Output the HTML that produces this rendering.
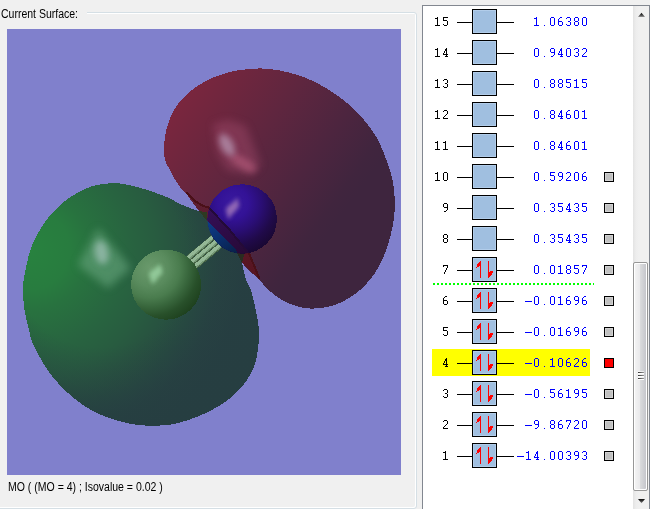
<!DOCTYPE html>
<html><head><meta charset="utf-8"><title>MO</title>
<style>
html,body{margin:0;padding:0}
body{width:650px;height:509px;overflow:hidden;background:#f0f0f0;position:relative;font-family:"Liberation Sans",sans-serif;font-size:12px;color:#000}
.gb{position:absolute;left:-6px;top:12px;width:421px;height:495px;border:1px solid #d5dfe5;border-radius:3px;box-shadow:inset 1px 1px 0 #fff,inset -1px -1px 0 #fff}
.lbl{position:absolute;left:0;top:6px;width:87px;height:16px;background:#f0f0f0;line-height:16px;white-space:nowrap}
  .lbl span{position:absolute;left:.5px;top:0;transform:scaleX(.875);transform-origin:0 0}
.cv{position:absolute;left:7px;top:29px;width:394px;height:446px;background:#8080cc;overflow:hidden}
.cv svg{display:block}
.cap{position:absolute;left:8px;top:479px;line-height:16px;white-space:nowrap;transform:scaleX(.876);transform-origin:0 0}
.lb{position:absolute;left:422px;top:5px;width:226px;height:520px;border:1px solid #828790;background:#fff}
.list{position:absolute;left:0;top:0;width:650px;height:509px;font-family:"Liberation Mono",monospace;font-size:13.33px}
.row{position:absolute;left:0;width:650px;height:25px}
.row.sel::before{content:"";position:absolute;left:432px;top:-1px;width:158px;height:27px;background:#ff0}
.n{position:absolute;left:418px;width:32px;top:4px;line-height:17px;text-align:right;color:transparent}
.ln{position:absolute;left:457px;top:13px;width:57px;height:1px;background:#000}
.bx{position:absolute;left:472px;top:0;width:23px;height:23px;border:1px solid #000;background:#a0bfe0;box-shadow:inset 0 0 0 1px #b2cdea}
.ar{position:absolute;left:0;top:0}
.e{position:absolute;left:501px;width:88px;top:4px;line-height:17px;text-align:right;color:transparent}
.px{position:absolute;left:0;top:0}
.sq{position:absolute;left:604px;top:8px;width:8px;height:8px;border:1px solid #000;background:#c0c0c0;box-shadow:inset 0 0 0 1px #d2d2d2}
.sq.red{background:#f00;box-shadow:none}
.dot{position:absolute;left:433px;top:283px;width:161px;height:2px;background:repeating-linear-gradient(90deg,#0f0 0,#0f0 2px,transparent 2px,transparent 4px)}
.sb{position:absolute;left:633px;top:6px;width:16px;height:503px;background:linear-gradient(90deg,#e3e3e3 0,#ededed 3px,#f0f0f0 6px,#f0f0f0 100%)}
.th{position:absolute;left:633px;top:262px;width:13px;height:227px;border:1px solid #979797;border-radius:2px;background:linear-gradient(90deg,#f5f5f5 0,#e9e9eb 45%,#d9dadc 50%,#c2c3c9 100%);box-shadow:inset 1px 1px 0 #fff,inset -1px -1px 0 #fff}
.gr{position:absolute;left:638px;width:6px;height:1px;background:linear-gradient(90deg,#333,#666 50%,#9a9a9a);box-shadow:0 1px 0 #fff,0 -1px 0 rgba(255,255,255,.6)}
.sa{position:absolute;left:637px}
.au,.ad{position:absolute;left:638px;width:0;height:0;border-left:4px solid transparent;border-right:4px solid transparent}
.au{top:13px;border-bottom:4px solid #303030}
.ad{top:499px;border-top:4px solid #303030}
</style></head><body>
<div class="gb"></div>
<div class="lbl"><span>Current Surface:</span></div>
<div class="cv"><svg width="394" height="446" viewBox="7 29 394 446" shape-rendering="crispEdges">
<defs>
<radialGradient id="gG" gradientUnits="userSpaceOnUse" cx="30" cy="250" r="220"><stop offset="0" stop-color="#28823f"/><stop offset=".18" stop-color="#287c3f"/><stop offset=".27" stop-color="#28723f"/><stop offset=".45" stop-color="#286440"/><stop offset=".57" stop-color="#285c40"/><stop offset=".66" stop-color="#285440"/><stop offset=".78" stop-color="#274a41"/><stop offset=".87" stop-color="#274342"/><stop offset=".98" stop-color="#263f42"/></radialGradient>
<radialGradient id="gG2" gradientUnits="userSpaceOnUse" cx="100" cy="260" r="175"><stop offset="0" stop-color="#263e41" stop-opacity="0"/><stop offset=".5" stop-color="#263e41" stop-opacity="0"/><stop offset=".72" stop-color="#263e41" stop-opacity=".35"/><stop offset=".88" stop-color="#263e41" stop-opacity=".75"/><stop offset="1" stop-color="#263e41" stop-opacity=".92"/></radialGradient>
<linearGradient id="gBand" gradientUnits="userSpaceOnUse" x1="186" y1="192" x2="260" y2="279"><stop offset="0" stop-color="#5e2034"/><stop offset=".5" stop-color="#5a1a2a"/><stop offset="1" stop-color="#581420"/></linearGradient>
<linearGradient id="gBand2" gradientUnits="userSpaceOnUse" x1="205" y1="205" x2="248" y2="254"><stop offset="0" stop-color="#36105a"/><stop offset=".5" stop-color="#2e0c48"/><stop offset="1" stop-color="#260a34"/></linearGradient>
<linearGradient id="gR" gradientUnits="userSpaceOnUse" x1="164.600" y1="76" x2="346.400" y2="208.200"><stop offset="0" stop-color="#83263e"/><stop offset=".25" stop-color="#71263e"/><stop offset=".5" stop-color="#5f263f"/><stop offset=".75" stop-color="#4d253f"/><stop offset=".94" stop-color="#40253e"/><stop offset="1" stop-color="#3e253e"/></linearGradient>
<radialGradient id="gB" gradientUnits="userSpaceOnUse" cx="233" cy="203" r="52">
<stop offset="0" stop-color="#3a1aa0"/><stop offset=".3" stop-color="#331296"/><stop offset=".55" stop-color="#2a0e74"/><stop offset=".8" stop-color="#200a4a"/><stop offset="1" stop-color="#1a0834"/></radialGradient>
<linearGradient id="gB2" gradientUnits="userSpaceOnUse" x1="208" y1="215" x2="236" y2="254">
<stop offset="0" stop-color="#0e408e"/><stop offset=".5" stop-color="#0b3070"/><stop offset="1" stop-color="#082048"/></linearGradient>
<radialGradient id="gS" gradientUnits="userSpaceOnUse" cx="150" cy="268" r="60">
<stop offset="0" stop-color="#6a9a6c"/><stop offset=".3" stop-color="#5a8c5e"/><stop offset=".5" stop-color="#4a7c4e"/><stop offset=".65" stop-color="#38663c"/><stop offset=".8" stop-color="#28502a"/><stop offset="1" stop-color="#1c3e1c"/></radialGradient>
<filter id="b4" x="-50%" y="-50%" width="200%" height="200%"><feGaussianBlur stdDeviation="4"/></filter>
<filter id="b3" x="-50%" y="-50%" width="200%" height="200%"><feGaussianBlur stdDeviation="3.2"/></filter>
<filter id="b25" x="-50%" y="-50%" width="200%" height="200%"><feGaussianBlur stdDeviation="2.5"/></filter>
<filter id="b22" x="-50%" y="-50%" width="200%" height="200%"><feGaussianBlur stdDeviation="2.2"/></filter>
<filter id="b18" x="-50%" y="-50%" width="200%" height="200%"><feGaussianBlur stdDeviation="1.7"/></filter>
<filter id="b1" x="-50%" y="-50%" width="200%" height="200%"><feGaussianBlur stdDeviation="1.2"/></filter>
<clipPath id="cB"><circle cx="242.2" cy="219" r="34.75"/></clipPath>
<clipPath id="cS"><circle cx="166.1" cy="284.7" r="35"/></clipPath>
<clipPath id="cR"><path d="M185.7 192.7C184.8 191.8 181.9 189.4 180.0 187.0C178.1 184.6 175.7 180.8 174.0 178.0C172.3 175.2 171.5 173.0 170.0 170.0C168.5 167.0 165.9 163.7 165.0 160.0C164.1 156.3 164.4 152.0 164.4 148.0C164.4 144.0 164.4 140.0 165.0 136.0C165.6 132.0 166.8 127.7 168.0 124.0C169.2 120.3 170.3 117.3 172.0 114.0C173.7 110.7 175.7 107.2 178.0 104.0C180.3 100.8 183.0 97.8 186.0 95.0C189.0 92.2 192.3 89.5 196.0 87.0C199.7 84.5 204.0 82.0 208.0 80.0C212.0 78.0 215.7 76.5 220.0 75.0C224.3 73.5 229.0 72.0 234.0 71.0C239.0 70.0 245.0 69.4 250.0 69.0C255.0 68.6 259.0 68.3 264.0 68.6C269.0 68.8 275.0 69.6 280.0 70.5C285.0 71.4 289.7 72.8 294.0 74.0C298.3 75.2 302.0 76.4 306.0 78.0C310.0 79.6 314.0 81.5 318.0 83.6C322.0 85.7 326.0 88.0 330.0 90.6C334.0 93.2 338.0 95.9 342.0 99.0C346.0 102.1 350.3 105.5 354.0 109.0C357.7 112.5 360.8 116.2 364.0 120.0C367.2 123.8 370.3 128.0 373.0 132.0C375.7 136.0 377.8 139.3 380.0 144.0C382.2 148.7 384.5 154.7 386.4 160.0C388.3 165.3 390.3 171.0 391.6 176.0C392.9 181.0 393.5 185.3 394.0 190.0C394.5 194.7 394.8 199.3 394.8 204.0C394.8 208.7 394.6 213.0 394.0 218.0C393.4 223.0 392.2 228.9 391.0 233.8C389.8 238.7 388.6 242.9 387.0 247.5C385.4 252.1 383.6 256.9 381.5 261.3C379.4 265.7 376.9 270.1 374.2 274.0C371.5 277.9 368.5 281.5 365.4 284.8C362.3 288.1 359.1 291.0 355.5 293.7C351.9 296.4 348.1 298.9 343.8 301.0C339.6 303.1 335.3 305.1 330.0 306.4C324.7 307.7 317.0 308.5 312.0 308.6C307.0 308.7 304.0 307.9 300.0 307.0C296.0 306.1 292.0 304.8 288.0 303.0C284.0 301.2 279.7 298.6 276.0 296.0C272.3 293.4 268.7 290.2 266.0 287.5C263.3 284.8 262.5 282.9 259.6 280.0C256.7 277.1 251.5 272.8 248.6 269.9C245.7 267.0 243.1 264.0 242.0 262.8L236 250L221.4 235L207.3 221L198.9 210.5L194.2 204.7Z"/></clipPath>
<clipPath id="cG"><path d="M210.0 214.0C209.5 213.8 208.9 212.9 207.1 212.5C205.2 212.1 201.8 212.1 198.9 211.3C196.1 210.6 193.2 209.2 190.0 208.0C186.8 206.8 183.7 205.6 180.0 203.9C176.3 202.2 172.0 199.4 168.0 197.6C164.0 195.8 160.0 194.4 156.0 193.0C152.0 191.6 148.0 190.2 144.0 189.0C140.0 187.8 136.0 186.5 132.0 185.6C128.0 184.7 122.8 184.0 120.0 183.6C117.2 183.2 117.8 182.9 115.0 183.0C112.2 183.1 107.0 183.4 103.0 184.0C99.0 184.6 95.0 185.3 91.0 186.6C87.0 187.9 83.0 189.9 79.0 192.0C75.0 194.1 70.7 196.7 67.0 199.4C63.3 202.1 60.2 204.9 57.0 208.0C53.8 211.1 50.7 214.7 48.0 218.0C45.3 221.3 43.2 224.5 41.0 228.0C38.8 231.5 36.8 235.2 35.0 239.0C33.2 242.8 31.3 247.0 30.0 251.0C28.7 255.0 27.8 259.5 27.0 263.0C26.2 266.5 25.6 268.8 25.0 272.0C24.4 275.2 23.7 278.3 23.4 282.0C23.1 285.7 22.9 290.0 23.0 294.0C23.1 298.0 23.5 302.0 24.0 306.0C24.5 310.0 25.2 314.0 26.0 318.0C26.8 322.0 28.1 326.3 29.0 330.0C29.9 333.7 30.2 336.7 31.4 340.0C32.6 343.3 34.2 346.5 36.0 350.0C37.8 353.5 39.8 357.3 42.0 361.0C44.2 364.7 46.3 368.3 49.0 372.0C51.7 375.7 54.8 379.5 58.0 383.0C61.2 386.5 64.5 389.8 68.0 393.0C71.5 396.2 75.2 399.2 79.0 402.0C82.8 404.8 86.7 407.6 91.0 410.0C95.3 412.4 100.3 414.6 105.0 416.4C109.7 418.2 114.3 419.7 119.0 421.0C123.7 422.3 127.7 423.4 133.0 424.2C138.3 425.0 144.0 425.9 151.0 425.8C158.0 425.7 167.0 425.4 175.0 423.8C183.0 422.2 191.7 419.0 199.0 416.0C206.3 413.0 213.0 409.7 219.0 406.0C225.0 402.3 230.3 398.3 235.0 394.0C239.7 389.7 243.7 385.0 247.0 380.0C250.3 375.0 253.1 370.0 255.0 364.0C256.9 358.0 257.8 349.7 258.5 344.0C259.2 338.3 259.2 334.7 259.0 330.0C258.8 325.3 257.8 320.3 257.0 316.0C256.2 311.7 255.4 308.3 254.4 304.0C253.4 299.7 252.4 294.0 251.0 290.0C249.6 286.0 247.4 283.1 246.2 280.0C245.0 276.9 244.6 274.3 243.9 271.4C243.2 268.5 242.3 264.2 242.0 262.8L236 250L221.4 235L207.3 221Z"/></clipPath>
</defs>
<rect x="7" y="29" width="394" height="446" fill="#8080cc"/>
<path d="M210.0 214.0C209.5 213.8 208.9 212.9 207.1 212.5C205.2 212.1 201.8 212.1 198.9 211.3C196.1 210.6 193.2 209.2 190.0 208.0C186.8 206.8 183.7 205.6 180.0 203.9C176.3 202.2 172.0 199.4 168.0 197.6C164.0 195.8 160.0 194.4 156.0 193.0C152.0 191.6 148.0 190.2 144.0 189.0C140.0 187.8 136.0 186.5 132.0 185.6C128.0 184.7 122.8 184.0 120.0 183.6C117.2 183.2 117.8 182.9 115.0 183.0C112.2 183.1 107.0 183.4 103.0 184.0C99.0 184.6 95.0 185.3 91.0 186.6C87.0 187.9 83.0 189.9 79.0 192.0C75.0 194.1 70.7 196.7 67.0 199.4C63.3 202.1 60.2 204.9 57.0 208.0C53.8 211.1 50.7 214.7 48.0 218.0C45.3 221.3 43.2 224.5 41.0 228.0C38.8 231.5 36.8 235.2 35.0 239.0C33.2 242.8 31.3 247.0 30.0 251.0C28.7 255.0 27.8 259.5 27.0 263.0C26.2 266.5 25.6 268.8 25.0 272.0C24.4 275.2 23.7 278.3 23.4 282.0C23.1 285.7 22.9 290.0 23.0 294.0C23.1 298.0 23.5 302.0 24.0 306.0C24.5 310.0 25.2 314.0 26.0 318.0C26.8 322.0 28.1 326.3 29.0 330.0C29.9 333.7 30.2 336.7 31.4 340.0C32.6 343.3 34.2 346.5 36.0 350.0C37.8 353.5 39.8 357.3 42.0 361.0C44.2 364.7 46.3 368.3 49.0 372.0C51.7 375.7 54.8 379.5 58.0 383.0C61.2 386.5 64.5 389.8 68.0 393.0C71.5 396.2 75.2 399.2 79.0 402.0C82.8 404.8 86.7 407.6 91.0 410.0C95.3 412.4 100.3 414.6 105.0 416.4C109.7 418.2 114.3 419.7 119.0 421.0C123.7 422.3 127.7 423.4 133.0 424.2C138.3 425.0 144.0 425.9 151.0 425.8C158.0 425.7 167.0 425.4 175.0 423.8C183.0 422.2 191.7 419.0 199.0 416.0C206.3 413.0 213.0 409.7 219.0 406.0C225.0 402.3 230.3 398.3 235.0 394.0C239.7 389.7 243.7 385.0 247.0 380.0C250.3 375.0 253.1 370.0 255.0 364.0C256.9 358.0 257.8 349.7 258.5 344.0C259.2 338.3 259.2 334.7 259.0 330.0C258.8 325.3 257.8 320.3 257.0 316.0C256.2 311.7 255.4 308.3 254.4 304.0C253.4 299.7 252.4 294.0 251.0 290.0C249.6 286.0 247.4 283.1 246.2 280.0C245.0 276.9 244.6 274.3 243.9 271.4C243.2 268.5 242.3 264.2 242.0 262.8L236 250L221.4 235L207.3 221Z" fill="url(#gG)"/>
<path d="M210.0 214.0C209.5 213.8 208.9 212.9 207.1 212.5C205.2 212.1 201.8 212.1 198.9 211.3C196.1 210.6 193.2 209.2 190.0 208.0C186.8 206.8 183.7 205.6 180.0 203.9C176.3 202.2 172.0 199.4 168.0 197.6C164.0 195.8 160.0 194.4 156.0 193.0C152.0 191.6 148.0 190.2 144.0 189.0C140.0 187.8 136.0 186.5 132.0 185.6C128.0 184.7 122.8 184.0 120.0 183.6C117.2 183.2 117.8 182.9 115.0 183.0C112.2 183.1 107.0 183.4 103.0 184.0C99.0 184.6 95.0 185.3 91.0 186.6C87.0 187.9 83.0 189.9 79.0 192.0C75.0 194.1 70.7 196.7 67.0 199.4C63.3 202.1 60.2 204.9 57.0 208.0C53.8 211.1 50.7 214.7 48.0 218.0C45.3 221.3 43.2 224.5 41.0 228.0C38.8 231.5 36.8 235.2 35.0 239.0C33.2 242.8 31.3 247.0 30.0 251.0C28.7 255.0 27.8 259.5 27.0 263.0C26.2 266.5 25.6 268.8 25.0 272.0C24.4 275.2 23.7 278.3 23.4 282.0C23.1 285.7 22.9 290.0 23.0 294.0C23.1 298.0 23.5 302.0 24.0 306.0C24.5 310.0 25.2 314.0 26.0 318.0C26.8 322.0 28.1 326.3 29.0 330.0C29.9 333.7 30.2 336.7 31.4 340.0C32.6 343.3 34.2 346.5 36.0 350.0C37.8 353.5 39.8 357.3 42.0 361.0C44.2 364.7 46.3 368.3 49.0 372.0C51.7 375.7 54.8 379.5 58.0 383.0C61.2 386.5 64.5 389.8 68.0 393.0C71.5 396.2 75.2 399.2 79.0 402.0C82.8 404.8 86.7 407.6 91.0 410.0C95.3 412.4 100.3 414.6 105.0 416.4C109.7 418.2 114.3 419.7 119.0 421.0C123.7 422.3 127.7 423.4 133.0 424.2C138.3 425.0 144.0 425.9 151.0 425.8C158.0 425.7 167.0 425.4 175.0 423.8C183.0 422.2 191.7 419.0 199.0 416.0C206.3 413.0 213.0 409.7 219.0 406.0C225.0 402.3 230.3 398.3 235.0 394.0C239.7 389.7 243.7 385.0 247.0 380.0C250.3 375.0 253.1 370.0 255.0 364.0C256.9 358.0 257.8 349.7 258.5 344.0C259.2 338.3 259.2 334.7 259.0 330.0C258.8 325.3 257.8 320.3 257.0 316.0C256.2 311.7 255.4 308.3 254.4 304.0C253.4 299.7 252.4 294.0 251.0 290.0C249.6 286.0 247.4 283.1 246.2 280.0C245.0 276.9 244.6 274.3 243.9 271.4C243.2 268.5 242.3 264.2 242.0 262.8L236 250L221.4 235L207.3 221Z" fill="url(#gG2)"/>
<g clip-path="url(#cG)">
<path d="M98 228L131 268L108 288L78 265Z" fill="#6aa880" opacity=".58" filter="url(#b4)"/>
<ellipse cx="101.500" cy="252.500" rx="7" ry="12" transform="rotate(-10 101.500 252.500)" fill="#98bcae" opacity=".82" filter="url(#b3)"/>
</g>
<path d="M185.7 192.7C184.8 191.8 181.9 189.4 180.0 187.0C178.1 184.6 175.7 180.8 174.0 178.0C172.3 175.2 171.5 173.0 170.0 170.0C168.5 167.0 165.9 163.7 165.0 160.0C164.1 156.3 164.4 152.0 164.4 148.0C164.4 144.0 164.4 140.0 165.0 136.0C165.6 132.0 166.8 127.7 168.0 124.0C169.2 120.3 170.3 117.3 172.0 114.0C173.7 110.7 175.7 107.2 178.0 104.0C180.3 100.8 183.0 97.8 186.0 95.0C189.0 92.2 192.3 89.5 196.0 87.0C199.7 84.5 204.0 82.0 208.0 80.0C212.0 78.0 215.7 76.5 220.0 75.0C224.3 73.5 229.0 72.0 234.0 71.0C239.0 70.0 245.0 69.4 250.0 69.0C255.0 68.6 259.0 68.3 264.0 68.6C269.0 68.8 275.0 69.6 280.0 70.5C285.0 71.4 289.7 72.8 294.0 74.0C298.3 75.2 302.0 76.4 306.0 78.0C310.0 79.6 314.0 81.5 318.0 83.6C322.0 85.7 326.0 88.0 330.0 90.6C334.0 93.2 338.0 95.9 342.0 99.0C346.0 102.1 350.3 105.5 354.0 109.0C357.7 112.5 360.8 116.2 364.0 120.0C367.2 123.8 370.3 128.0 373.0 132.0C375.7 136.0 377.8 139.3 380.0 144.0C382.2 148.7 384.5 154.7 386.4 160.0C388.3 165.3 390.3 171.0 391.6 176.0C392.9 181.0 393.5 185.3 394.0 190.0C394.5 194.7 394.8 199.3 394.8 204.0C394.8 208.7 394.6 213.0 394.0 218.0C393.4 223.0 392.2 228.9 391.0 233.8C389.8 238.7 388.6 242.9 387.0 247.5C385.4 252.1 383.6 256.9 381.5 261.3C379.4 265.7 376.9 270.1 374.2 274.0C371.5 277.9 368.5 281.5 365.4 284.8C362.3 288.1 359.1 291.0 355.5 293.7C351.9 296.4 348.1 298.9 343.8 301.0C339.6 303.1 335.3 305.1 330.0 306.4C324.7 307.7 317.0 308.5 312.0 308.6C307.0 308.7 304.0 307.9 300.0 307.0C296.0 306.1 292.0 304.8 288.0 303.0C284.0 301.2 279.7 298.6 276.0 296.0C272.3 293.4 268.7 290.2 266.0 287.5C263.3 284.8 262.5 282.9 259.6 280.0C256.7 277.1 251.5 272.8 248.6 269.9C245.7 267.0 243.1 264.0 242.0 262.8L236 250L221.4 235L207.3 221L198.9 210.5L194.2 204.7Z" fill="url(#gR)"/>
<g clip-path="url(#cR)">
<path d="M213 124L228 120L246 126L261 165L251 175L227 170L217 152Z" fill="#a04c6c" opacity=".45" filter="url(#b4)"/>
<ellipse cx="243" cy="163" rx="15" ry="5.500" transform="rotate(32 243 163)" fill="#b05878" opacity=".7" filter="url(#b3)"/>
<ellipse cx="227" cy="145" rx="6" ry="12" transform="rotate(-28 227 145)" fill="#b08ca8" opacity=".85" filter="url(#b3)"/>
</g>
<!-- red rim band along nodal plane -->
<path d="M186.3 192L195.7 201.5L203.6 206.2L208.9 207.6L230 230.4L249.4 254.2L259.6 279.3L242 262.8L236 250L221.4 235L207.3 221L198.9 210.5L194.2 204.7Z" fill="url(#gBand)"/>
<path d="M186.3 192L195.7 201.5L203.6 206.2L208.9 207.6L230 230.4L249.4 254.2L259.6 279" fill="none" stroke="#4a1018" stroke-width="2"/>
<path d="M198.9 211L207.1 212.5L207.5 221.5Z" fill="#2e3a22"/>
<path d="M235.500 250.500L244 254.500L242 262.800Z" fill="#2a2c20"/>
<!-- bonds -->
<g stroke-linecap="butt" fill="none">
<g stroke="#446244" stroke-width="5.4"><path d="M183.7 261.8L217.6 233.7"/><path d="M187.3 266.1L221.1 237.9"/><path d="M190.8 270.3L224.7 242.2"/></g>
<g stroke="#769a78" stroke-width="4.2"><path d="M183.6 261.6L217.4 233.5"/><path d="M187.1 265.8L220.9 237.7"/><path d="M190.6 270.1L224.5 241.9"/></g>
<g stroke="#94b896" stroke-width="3"><path d="M183.2 261.1L217.1 233.0"/><path d="M186.7 265.4L220.6 237.2"/><path d="M190.2 269.6L224.1 241.5"/></g>
</g>
<!-- blue sphere -->
<circle cx="242.2" cy="219" r="34.75" fill="url(#gB)"/>
<g clip-path="url(#cB)">
<path d="M194.2 204.7L198.9 210.5L207.3 221L221.4 235L236 250L242 262.8L190 266Z" fill="url(#gB2)"/>
<path d="M186.3 192L195.7 201.5L203.6 206.2L208.9 207.6L230 230.4L249.4 254.2L259.6 279.3L242 262.8L236 250L221.4 235L207.3 221L198.9 210.5L194.2 204.7Z" fill="url(#gBand2)"/>
<path d="M186.3 192L195.7 201.5L203.6 206.2L208.9 207.6L230 230.4L249.4 254.2L259.6 279" fill="none" stroke="#240a38" stroke-width="2"/>
<path d="M225.600 208.600L238 198L238.900 206.800L228.300 219.200Z" fill="#9a70b8" opacity=".92" filter="url(#b22)"/>
</g>

<!-- green sphere -->
<circle cx="166.1" cy="284.7" r="35" fill="url(#gS)"/>
<g clip-path="url(#cS)">
<path d="M148.600 273.300L160.300 263.900L162.700 272.500L152.500 284.300Z" fill="#98d0a0" opacity=".88" filter="url(#b22)"/>
</g>
</svg></div>
<div class="cap">MO ( (MO = 4) ; Isovalue = 0.02 )</div>
<div class="lb"></div>
<div class="list">
<div class="row" style="top:9px"><span class="n">15</span><span class="ln"></span><span class="bx"></span><span class="e">1.06380</span></div>
<div class="row" style="top:40px"><span class="n">14</span><span class="ln"></span><span class="bx"></span><span class="e">0.94032</span></div>
<div class="row" style="top:71px"><span class="n">13</span><span class="ln"></span><span class="bx"></span><span class="e">0.88515</span></div>
<div class="row" style="top:102px"><span class="n">12</span><span class="ln"></span><span class="bx"></span><span class="e">0.84601</span></div>
<div class="row" style="top:133px"><span class="n">11</span><span class="ln"></span><span class="bx"></span><span class="e">0.84601</span></div>
<div class="row" style="top:164px"><span class="n">10</span><span class="ln"></span><span class="bx"></span><span class="e">0.59206</span><span class="sq"></span></div>
<div class="row" style="top:195px"><span class="n">9</span><span class="ln"></span><span class="bx"></span><span class="e">0.35435</span><span class="sq"></span></div>
<div class="row" style="top:226px"><span class="n">8</span><span class="ln"></span><span class="bx"></span><span class="e">0.35435</span><span class="sq"></span></div>
<div class="row" style="top:257px"><span class="n">7</span><span class="ln"></span><span class="bx"><svg class="ar" width="23" height="23" viewBox="0 0 23 23" shape-rendering="crispEdges"><path d="M7 3h1v1h-1zM6 4h2v1h-2zM5 5h3v1h-3zM4 6h4v1h-4zM4 7h4v1h-4zM4 8h2v1h-2zM7 8h1v1h-1zM3 9h1v1h-1zM7 9h1v1h-1zM7 10h1v1h-1zM7 11h1v1h-1zM7 12h1v1h-1zM7 13h1v1h-1zM7 14h1v1h-1zM7 15h1v1h-1zM7 16h1v1h-1zM7 17h1v1h-1zM7 18h1v1h-1zM7 19h1v1h-1zM15 3h1v1h-1zM15 4h1v1h-1zM15 5h1v1h-1zM15 6h1v1h-1zM15 7h1v1h-1zM15 8h1v1h-1zM15 9h1v1h-1zM15 10h1v1h-1zM15 11h1v1h-1zM15 12h1v1h-1zM15 13h1v1h-1zM17 13h3v1h-3zM15 14h5v1h-5zM15 15h4v1h-4zM15 16h4v1h-4zM15 17h3v1h-3zM15 18h2v1h-2zM15 19h1v1h-1z" fill="#f00"/></svg></span><span class="e">0.01857</span><span class="sq"></span></div>
<div class="row" style="top:288px"><span class="n">6</span><span class="ln"></span><span class="bx"><svg class="ar" width="23" height="23" viewBox="0 0 23 23" shape-rendering="crispEdges"><path d="M7 3h1v1h-1zM6 4h2v1h-2zM5 5h3v1h-3zM4 6h4v1h-4zM4 7h4v1h-4zM4 8h2v1h-2zM7 8h1v1h-1zM3 9h1v1h-1zM7 9h1v1h-1zM7 10h1v1h-1zM7 11h1v1h-1zM7 12h1v1h-1zM7 13h1v1h-1zM7 14h1v1h-1zM7 15h1v1h-1zM7 16h1v1h-1zM7 17h1v1h-1zM7 18h1v1h-1zM7 19h1v1h-1zM15 3h1v1h-1zM15 4h1v1h-1zM15 5h1v1h-1zM15 6h1v1h-1zM15 7h1v1h-1zM15 8h1v1h-1zM15 9h1v1h-1zM15 10h1v1h-1zM15 11h1v1h-1zM15 12h1v1h-1zM15 13h1v1h-1zM17 13h3v1h-3zM15 14h5v1h-5zM15 15h4v1h-4zM15 16h4v1h-4zM15 17h3v1h-3zM15 18h2v1h-2zM15 19h1v1h-1z" fill="#f00"/></svg></span><span class="e">-0.01696</span><span class="sq"></span></div>
<div class="row" style="top:319px"><span class="n">5</span><span class="ln"></span><span class="bx"><svg class="ar" width="23" height="23" viewBox="0 0 23 23" shape-rendering="crispEdges"><path d="M7 3h1v1h-1zM6 4h2v1h-2zM5 5h3v1h-3zM4 6h4v1h-4zM4 7h4v1h-4zM4 8h2v1h-2zM7 8h1v1h-1zM3 9h1v1h-1zM7 9h1v1h-1zM7 10h1v1h-1zM7 11h1v1h-1zM7 12h1v1h-1zM7 13h1v1h-1zM7 14h1v1h-1zM7 15h1v1h-1zM7 16h1v1h-1zM7 17h1v1h-1zM7 18h1v1h-1zM7 19h1v1h-1zM15 3h1v1h-1zM15 4h1v1h-1zM15 5h1v1h-1zM15 6h1v1h-1zM15 7h1v1h-1zM15 8h1v1h-1zM15 9h1v1h-1zM15 10h1v1h-1zM15 11h1v1h-1zM15 12h1v1h-1zM15 13h1v1h-1zM17 13h3v1h-3zM15 14h5v1h-5zM15 15h4v1h-4zM15 16h4v1h-4zM15 17h3v1h-3zM15 18h2v1h-2zM15 19h1v1h-1z" fill="#f00"/></svg></span><span class="e">-0.01696</span><span class="sq"></span></div>
<div class="row sel" style="top:350px"><span class="n">4</span><span class="ln"></span><span class="bx"><svg class="ar" width="23" height="23" viewBox="0 0 23 23" shape-rendering="crispEdges"><path d="M7 3h1v1h-1zM6 4h2v1h-2zM5 5h3v1h-3zM4 6h4v1h-4zM4 7h4v1h-4zM4 8h2v1h-2zM7 8h1v1h-1zM3 9h1v1h-1zM7 9h1v1h-1zM7 10h1v1h-1zM7 11h1v1h-1zM7 12h1v1h-1zM7 13h1v1h-1zM7 14h1v1h-1zM7 15h1v1h-1zM7 16h1v1h-1zM7 17h1v1h-1zM7 18h1v1h-1zM7 19h1v1h-1zM15 3h1v1h-1zM15 4h1v1h-1zM15 5h1v1h-1zM15 6h1v1h-1zM15 7h1v1h-1zM15 8h1v1h-1zM15 9h1v1h-1zM15 10h1v1h-1zM15 11h1v1h-1zM15 12h1v1h-1zM15 13h1v1h-1zM17 13h3v1h-3zM15 14h5v1h-5zM15 15h4v1h-4zM15 16h4v1h-4zM15 17h3v1h-3zM15 18h2v1h-2zM15 19h1v1h-1z" fill="#f00"/></svg></span><span class="e">-0.10626</span><span class="sq red"></span></div>
<div class="row" style="top:381px"><span class="n">3</span><span class="ln"></span><span class="bx"><svg class="ar" width="23" height="23" viewBox="0 0 23 23" shape-rendering="crispEdges"><path d="M7 3h1v1h-1zM6 4h2v1h-2zM5 5h3v1h-3zM4 6h4v1h-4zM4 7h4v1h-4zM4 8h2v1h-2zM7 8h1v1h-1zM3 9h1v1h-1zM7 9h1v1h-1zM7 10h1v1h-1zM7 11h1v1h-1zM7 12h1v1h-1zM7 13h1v1h-1zM7 14h1v1h-1zM7 15h1v1h-1zM7 16h1v1h-1zM7 17h1v1h-1zM7 18h1v1h-1zM7 19h1v1h-1zM15 3h1v1h-1zM15 4h1v1h-1zM15 5h1v1h-1zM15 6h1v1h-1zM15 7h1v1h-1zM15 8h1v1h-1zM15 9h1v1h-1zM15 10h1v1h-1zM15 11h1v1h-1zM15 12h1v1h-1zM15 13h1v1h-1zM17 13h3v1h-3zM15 14h5v1h-5zM15 15h4v1h-4zM15 16h4v1h-4zM15 17h3v1h-3zM15 18h2v1h-2zM15 19h1v1h-1z" fill="#f00"/></svg></span><span class="e">-0.56195</span><span class="sq"></span></div>
<div class="row" style="top:412px"><span class="n">2</span><span class="ln"></span><span class="bx"><svg class="ar" width="23" height="23" viewBox="0 0 23 23" shape-rendering="crispEdges"><path d="M7 3h1v1h-1zM6 4h2v1h-2zM5 5h3v1h-3zM4 6h4v1h-4zM4 7h4v1h-4zM4 8h2v1h-2zM7 8h1v1h-1zM3 9h1v1h-1zM7 9h1v1h-1zM7 10h1v1h-1zM7 11h1v1h-1zM7 12h1v1h-1zM7 13h1v1h-1zM7 14h1v1h-1zM7 15h1v1h-1zM7 16h1v1h-1zM7 17h1v1h-1zM7 18h1v1h-1zM7 19h1v1h-1zM15 3h1v1h-1zM15 4h1v1h-1zM15 5h1v1h-1zM15 6h1v1h-1zM15 7h1v1h-1zM15 8h1v1h-1zM15 9h1v1h-1zM15 10h1v1h-1zM15 11h1v1h-1zM15 12h1v1h-1zM15 13h1v1h-1zM17 13h3v1h-3zM15 14h5v1h-5zM15 15h4v1h-4zM15 16h4v1h-4zM15 17h3v1h-3zM15 18h2v1h-2zM15 19h1v1h-1z" fill="#f00"/></svg></span><span class="e">-9.86720</span><span class="sq"></span></div>
<div class="row" style="top:443px"><span class="n">1</span><span class="ln"></span><span class="bx"><svg class="ar" width="23" height="23" viewBox="0 0 23 23" shape-rendering="crispEdges"><path d="M7 3h1v1h-1zM6 4h2v1h-2zM5 5h3v1h-3zM4 6h4v1h-4zM4 7h4v1h-4zM4 8h2v1h-2zM7 8h1v1h-1zM3 9h1v1h-1zM7 9h1v1h-1zM7 10h1v1h-1zM7 11h1v1h-1zM7 12h1v1h-1zM7 13h1v1h-1zM7 14h1v1h-1zM7 15h1v1h-1zM7 16h1v1h-1zM7 17h1v1h-1zM7 18h1v1h-1zM7 19h1v1h-1zM15 3h1v1h-1zM15 4h1v1h-1zM15 5h1v1h-1zM15 6h1v1h-1zM15 7h1v1h-1zM15 8h1v1h-1zM15 9h1v1h-1zM15 10h1v1h-1zM15 11h1v1h-1zM15 12h1v1h-1zM15 13h1v1h-1zM17 13h3v1h-3zM15 14h5v1h-5zM15 15h4v1h-4zM15 16h4v1h-4zM15 17h3v1h-3zM15 18h2v1h-2zM15 19h1v1h-1z" fill="#f00"/></svg></span><span class="e">-14.00393</span><span class="sq"></span></div>
<div class="dot"></div>
<svg class="px" width="650" height="509" viewBox="0 0 650 509" shape-rendering="crispEdges"><path fill="#000" d="M437 17h1v1h-1zM435 18h3v1h-3zM437 19h1v1h-1zM437 20h1v1h-1zM437 21h1v1h-1zM437 22h1v1h-1zM437 23h1v1h-1zM437 24h1v1h-1zM435 25h5v1h-5zM443 17h5v1h-5zM443 18h1v1h-1zM443 19h1v1h-1zM443 20h4v1h-4zM447 21h1v1h-1zM447 22h1v1h-1zM447 23h1v1h-1zM443 24h1v1h-1zM447 24h1v1h-1zM444 25h3v1h-3zM437 48h1v1h-1zM435 49h3v1h-3zM437 50h1v1h-1zM437 51h1v1h-1zM437 52h1v1h-1zM437 53h1v1h-1zM437 54h1v1h-1zM437 55h1v1h-1zM435 56h5v1h-5zM446 48h1v1h-1zM445 49h2v1h-2zM445 50h2v1h-2zM444 51h1v1h-1zM446 51h1v1h-1zM444 52h1v1h-1zM446 52h1v1h-1zM443 53h1v1h-1zM446 53h1v1h-1zM443 54h5v1h-5zM446 55h1v1h-1zM445 56h3v1h-3zM437 79h1v1h-1zM435 80h3v1h-3zM437 81h1v1h-1zM437 82h1v1h-1zM437 83h1v1h-1zM437 84h1v1h-1zM437 85h1v1h-1zM437 86h1v1h-1zM435 87h5v1h-5zM444 79h3v1h-3zM443 80h1v1h-1zM447 80h1v1h-1zM447 81h1v1h-1zM447 82h1v1h-1zM445 83h2v1h-2zM447 84h1v1h-1zM447 85h1v1h-1zM443 86h1v1h-1zM447 86h1v1h-1zM444 87h3v1h-3zM437 110h1v1h-1zM435 111h3v1h-3zM437 112h1v1h-1zM437 113h1v1h-1zM437 114h1v1h-1zM437 115h1v1h-1zM437 116h1v1h-1zM437 117h1v1h-1zM435 118h5v1h-5zM444 110h3v1h-3zM443 111h1v1h-1zM447 111h1v1h-1zM447 112h1v1h-1zM447 113h1v1h-1zM446 114h1v1h-1zM445 115h1v1h-1zM444 116h1v1h-1zM443 117h1v1h-1zM443 118h5v1h-5zM437 141h1v1h-1zM435 142h3v1h-3zM437 143h1v1h-1zM437 144h1v1h-1zM437 145h1v1h-1zM437 146h1v1h-1zM437 147h1v1h-1zM437 148h1v1h-1zM435 149h5v1h-5zM445 141h1v1h-1zM443 142h3v1h-3zM445 143h1v1h-1zM445 144h1v1h-1zM445 145h1v1h-1zM445 146h1v1h-1zM445 147h1v1h-1zM445 148h1v1h-1zM443 149h5v1h-5zM437 172h1v1h-1zM435 173h3v1h-3zM437 174h1v1h-1zM437 175h1v1h-1zM437 176h1v1h-1zM437 177h1v1h-1zM437 178h1v1h-1zM437 179h1v1h-1zM435 180h5v1h-5zM444 172h3v1h-3zM443 173h1v1h-1zM447 173h1v1h-1zM443 174h1v1h-1zM447 174h1v1h-1zM443 175h1v1h-1zM447 175h1v1h-1zM443 176h1v1h-1zM447 176h1v1h-1zM443 177h1v1h-1zM447 177h1v1h-1zM443 178h1v1h-1zM447 178h1v1h-1zM443 179h1v1h-1zM447 179h1v1h-1zM444 180h3v1h-3zM444 203h3v1h-3zM443 204h1v1h-1zM447 204h1v1h-1zM443 205h1v1h-1zM447 205h1v1h-1zM443 206h1v1h-1zM447 206h1v1h-1zM444 207h4v1h-4zM447 208h1v1h-1zM447 209h1v1h-1zM446 210h1v1h-1zM444 211h2v1h-2zM444 234h3v1h-3zM443 235h1v1h-1zM447 235h1v1h-1zM443 236h1v1h-1zM447 236h1v1h-1zM443 237h1v1h-1zM447 237h1v1h-1zM444 238h3v1h-3zM443 239h1v1h-1zM447 239h1v1h-1zM443 240h1v1h-1zM447 240h1v1h-1zM443 241h1v1h-1zM447 241h1v1h-1zM444 242h3v1h-3zM443 265h5v1h-5zM443 266h1v1h-1zM447 266h1v1h-1zM447 267h1v1h-1zM446 268h1v1h-1zM446 269h1v1h-1zM445 270h1v1h-1zM445 271h1v1h-1zM444 272h1v1h-1zM444 273h1v1h-1zM445 296h2v1h-2zM444 297h1v1h-1zM443 298h1v1h-1zM443 299h1v1h-1zM443 300h4v1h-4zM443 301h1v1h-1zM447 301h1v1h-1zM443 302h1v1h-1zM447 302h1v1h-1zM443 303h1v1h-1zM447 303h1v1h-1zM444 304h3v1h-3zM443 327h5v1h-5zM443 328h1v1h-1zM443 329h1v1h-1zM443 330h4v1h-4zM447 331h1v1h-1zM447 332h1v1h-1zM447 333h1v1h-1zM443 334h1v1h-1zM447 334h1v1h-1zM444 335h3v1h-3zM446 358h1v1h-1zM445 359h2v1h-2zM445 360h2v1h-2zM444 361h1v1h-1zM446 361h1v1h-1zM444 362h1v1h-1zM446 362h1v1h-1zM443 363h1v1h-1zM446 363h1v1h-1zM443 364h5v1h-5zM446 365h1v1h-1zM445 366h3v1h-3zM444 389h3v1h-3zM443 390h1v1h-1zM447 390h1v1h-1zM447 391h1v1h-1zM447 392h1v1h-1zM445 393h2v1h-2zM447 394h1v1h-1zM447 395h1v1h-1zM443 396h1v1h-1zM447 396h1v1h-1zM444 397h3v1h-3zM444 420h3v1h-3zM443 421h1v1h-1zM447 421h1v1h-1zM447 422h1v1h-1zM447 423h1v1h-1zM446 424h1v1h-1zM445 425h1v1h-1zM444 426h1v1h-1zM443 427h1v1h-1zM443 428h5v1h-5zM445 451h1v1h-1zM443 452h3v1h-3zM445 453h1v1h-1zM445 454h1v1h-1zM445 455h1v1h-1zM445 456h1v1h-1zM445 457h1v1h-1zM445 458h1v1h-1zM443 459h5v1h-5z"/><path fill="#00f" d="M536 17h1v1h-1zM534 18h3v1h-3zM536 19h1v1h-1zM536 20h1v1h-1zM536 21h1v1h-1zM536 22h1v1h-1zM536 23h1v1h-1zM536 24h1v1h-1zM534 25h5v1h-5zM544 25h1v1h-1zM551 17h3v1h-3zM550 18h1v1h-1zM554 18h1v1h-1zM550 19h1v1h-1zM554 19h1v1h-1zM550 20h1v1h-1zM554 20h1v1h-1zM550 21h1v1h-1zM554 21h1v1h-1zM550 22h1v1h-1zM554 22h1v1h-1zM550 23h1v1h-1zM554 23h1v1h-1zM550 24h1v1h-1zM554 24h1v1h-1zM551 25h3v1h-3zM560 17h2v1h-2zM559 18h1v1h-1zM558 19h1v1h-1zM558 20h1v1h-1zM558 21h4v1h-4zM558 22h1v1h-1zM562 22h1v1h-1zM558 23h1v1h-1zM562 23h1v1h-1zM558 24h1v1h-1zM562 24h1v1h-1zM559 25h3v1h-3zM567 17h3v1h-3zM566 18h1v1h-1zM570 18h1v1h-1zM570 19h1v1h-1zM570 20h1v1h-1zM568 21h2v1h-2zM570 22h1v1h-1zM570 23h1v1h-1zM566 24h1v1h-1zM570 24h1v1h-1zM567 25h3v1h-3zM575 17h3v1h-3zM574 18h1v1h-1zM578 18h1v1h-1zM574 19h1v1h-1zM578 19h1v1h-1zM574 20h1v1h-1zM578 20h1v1h-1zM575 21h3v1h-3zM574 22h1v1h-1zM578 22h1v1h-1zM574 23h1v1h-1zM578 23h1v1h-1zM574 24h1v1h-1zM578 24h1v1h-1zM575 25h3v1h-3zM583 17h3v1h-3zM582 18h1v1h-1zM586 18h1v1h-1zM582 19h1v1h-1zM586 19h1v1h-1zM582 20h1v1h-1zM586 20h1v1h-1zM582 21h1v1h-1zM586 21h1v1h-1zM582 22h1v1h-1zM586 22h1v1h-1zM582 23h1v1h-1zM586 23h1v1h-1zM582 24h1v1h-1zM586 24h1v1h-1zM583 25h3v1h-3zM535 48h3v1h-3zM534 49h1v1h-1zM538 49h1v1h-1zM534 50h1v1h-1zM538 50h1v1h-1zM534 51h1v1h-1zM538 51h1v1h-1zM534 52h1v1h-1zM538 52h1v1h-1zM534 53h1v1h-1zM538 53h1v1h-1zM534 54h1v1h-1zM538 54h1v1h-1zM534 55h1v1h-1zM538 55h1v1h-1zM535 56h3v1h-3zM544 56h1v1h-1zM551 48h3v1h-3zM550 49h1v1h-1zM554 49h1v1h-1zM550 50h1v1h-1zM554 50h1v1h-1zM550 51h1v1h-1zM554 51h1v1h-1zM551 52h4v1h-4zM554 53h1v1h-1zM554 54h1v1h-1zM553 55h1v1h-1zM551 56h2v1h-2zM561 48h1v1h-1zM560 49h2v1h-2zM560 50h2v1h-2zM559 51h1v1h-1zM561 51h1v1h-1zM559 52h1v1h-1zM561 52h1v1h-1zM558 53h1v1h-1zM561 53h1v1h-1zM558 54h5v1h-5zM561 55h1v1h-1zM560 56h3v1h-3zM567 48h3v1h-3zM566 49h1v1h-1zM570 49h1v1h-1zM566 50h1v1h-1zM570 50h1v1h-1zM566 51h1v1h-1zM570 51h1v1h-1zM566 52h1v1h-1zM570 52h1v1h-1zM566 53h1v1h-1zM570 53h1v1h-1zM566 54h1v1h-1zM570 54h1v1h-1zM566 55h1v1h-1zM570 55h1v1h-1zM567 56h3v1h-3zM575 48h3v1h-3zM574 49h1v1h-1zM578 49h1v1h-1zM578 50h1v1h-1zM578 51h1v1h-1zM576 52h2v1h-2zM578 53h1v1h-1zM578 54h1v1h-1zM574 55h1v1h-1zM578 55h1v1h-1zM575 56h3v1h-3zM583 48h3v1h-3zM582 49h1v1h-1zM586 49h1v1h-1zM586 50h1v1h-1zM586 51h1v1h-1zM585 52h1v1h-1zM584 53h1v1h-1zM583 54h1v1h-1zM582 55h1v1h-1zM582 56h5v1h-5zM535 79h3v1h-3zM534 80h1v1h-1zM538 80h1v1h-1zM534 81h1v1h-1zM538 81h1v1h-1zM534 82h1v1h-1zM538 82h1v1h-1zM534 83h1v1h-1zM538 83h1v1h-1zM534 84h1v1h-1zM538 84h1v1h-1zM534 85h1v1h-1zM538 85h1v1h-1zM534 86h1v1h-1zM538 86h1v1h-1zM535 87h3v1h-3zM544 87h1v1h-1zM551 79h3v1h-3zM550 80h1v1h-1zM554 80h1v1h-1zM550 81h1v1h-1zM554 81h1v1h-1zM550 82h1v1h-1zM554 82h1v1h-1zM551 83h3v1h-3zM550 84h1v1h-1zM554 84h1v1h-1zM550 85h1v1h-1zM554 85h1v1h-1zM550 86h1v1h-1zM554 86h1v1h-1zM551 87h3v1h-3zM559 79h3v1h-3zM558 80h1v1h-1zM562 80h1v1h-1zM558 81h1v1h-1zM562 81h1v1h-1zM558 82h1v1h-1zM562 82h1v1h-1zM559 83h3v1h-3zM558 84h1v1h-1zM562 84h1v1h-1zM558 85h1v1h-1zM562 85h1v1h-1zM558 86h1v1h-1zM562 86h1v1h-1zM559 87h3v1h-3zM566 79h5v1h-5zM566 80h1v1h-1zM566 81h1v1h-1zM566 82h4v1h-4zM570 83h1v1h-1zM570 84h1v1h-1zM570 85h1v1h-1zM566 86h1v1h-1zM570 86h1v1h-1zM567 87h3v1h-3zM576 79h1v1h-1zM574 80h3v1h-3zM576 81h1v1h-1zM576 82h1v1h-1zM576 83h1v1h-1zM576 84h1v1h-1zM576 85h1v1h-1zM576 86h1v1h-1zM574 87h5v1h-5zM582 79h5v1h-5zM582 80h1v1h-1zM582 81h1v1h-1zM582 82h4v1h-4zM586 83h1v1h-1zM586 84h1v1h-1zM586 85h1v1h-1zM582 86h1v1h-1zM586 86h1v1h-1zM583 87h3v1h-3zM535 110h3v1h-3zM534 111h1v1h-1zM538 111h1v1h-1zM534 112h1v1h-1zM538 112h1v1h-1zM534 113h1v1h-1zM538 113h1v1h-1zM534 114h1v1h-1zM538 114h1v1h-1zM534 115h1v1h-1zM538 115h1v1h-1zM534 116h1v1h-1zM538 116h1v1h-1zM534 117h1v1h-1zM538 117h1v1h-1zM535 118h3v1h-3zM544 118h1v1h-1zM551 110h3v1h-3zM550 111h1v1h-1zM554 111h1v1h-1zM550 112h1v1h-1zM554 112h1v1h-1zM550 113h1v1h-1zM554 113h1v1h-1zM551 114h3v1h-3zM550 115h1v1h-1zM554 115h1v1h-1zM550 116h1v1h-1zM554 116h1v1h-1zM550 117h1v1h-1zM554 117h1v1h-1zM551 118h3v1h-3zM561 110h1v1h-1zM560 111h2v1h-2zM560 112h2v1h-2zM559 113h1v1h-1zM561 113h1v1h-1zM559 114h1v1h-1zM561 114h1v1h-1zM558 115h1v1h-1zM561 115h1v1h-1zM558 116h5v1h-5zM561 117h1v1h-1zM560 118h3v1h-3zM568 110h2v1h-2zM567 111h1v1h-1zM566 112h1v1h-1zM566 113h1v1h-1zM566 114h4v1h-4zM566 115h1v1h-1zM570 115h1v1h-1zM566 116h1v1h-1zM570 116h1v1h-1zM566 117h1v1h-1zM570 117h1v1h-1zM567 118h3v1h-3zM575 110h3v1h-3zM574 111h1v1h-1zM578 111h1v1h-1zM574 112h1v1h-1zM578 112h1v1h-1zM574 113h1v1h-1zM578 113h1v1h-1zM574 114h1v1h-1zM578 114h1v1h-1zM574 115h1v1h-1zM578 115h1v1h-1zM574 116h1v1h-1zM578 116h1v1h-1zM574 117h1v1h-1zM578 117h1v1h-1zM575 118h3v1h-3zM584 110h1v1h-1zM582 111h3v1h-3zM584 112h1v1h-1zM584 113h1v1h-1zM584 114h1v1h-1zM584 115h1v1h-1zM584 116h1v1h-1zM584 117h1v1h-1zM582 118h5v1h-5zM535 141h3v1h-3zM534 142h1v1h-1zM538 142h1v1h-1zM534 143h1v1h-1zM538 143h1v1h-1zM534 144h1v1h-1zM538 144h1v1h-1zM534 145h1v1h-1zM538 145h1v1h-1zM534 146h1v1h-1zM538 146h1v1h-1zM534 147h1v1h-1zM538 147h1v1h-1zM534 148h1v1h-1zM538 148h1v1h-1zM535 149h3v1h-3zM544 149h1v1h-1zM551 141h3v1h-3zM550 142h1v1h-1zM554 142h1v1h-1zM550 143h1v1h-1zM554 143h1v1h-1zM550 144h1v1h-1zM554 144h1v1h-1zM551 145h3v1h-3zM550 146h1v1h-1zM554 146h1v1h-1zM550 147h1v1h-1zM554 147h1v1h-1zM550 148h1v1h-1zM554 148h1v1h-1zM551 149h3v1h-3zM561 141h1v1h-1zM560 142h2v1h-2zM560 143h2v1h-2zM559 144h1v1h-1zM561 144h1v1h-1zM559 145h1v1h-1zM561 145h1v1h-1zM558 146h1v1h-1zM561 146h1v1h-1zM558 147h5v1h-5zM561 148h1v1h-1zM560 149h3v1h-3zM568 141h2v1h-2zM567 142h1v1h-1zM566 143h1v1h-1zM566 144h1v1h-1zM566 145h4v1h-4zM566 146h1v1h-1zM570 146h1v1h-1zM566 147h1v1h-1zM570 147h1v1h-1zM566 148h1v1h-1zM570 148h1v1h-1zM567 149h3v1h-3zM575 141h3v1h-3zM574 142h1v1h-1zM578 142h1v1h-1zM574 143h1v1h-1zM578 143h1v1h-1zM574 144h1v1h-1zM578 144h1v1h-1zM574 145h1v1h-1zM578 145h1v1h-1zM574 146h1v1h-1zM578 146h1v1h-1zM574 147h1v1h-1zM578 147h1v1h-1zM574 148h1v1h-1zM578 148h1v1h-1zM575 149h3v1h-3zM584 141h1v1h-1zM582 142h3v1h-3zM584 143h1v1h-1zM584 144h1v1h-1zM584 145h1v1h-1zM584 146h1v1h-1zM584 147h1v1h-1zM584 148h1v1h-1zM582 149h5v1h-5zM535 172h3v1h-3zM534 173h1v1h-1zM538 173h1v1h-1zM534 174h1v1h-1zM538 174h1v1h-1zM534 175h1v1h-1zM538 175h1v1h-1zM534 176h1v1h-1zM538 176h1v1h-1zM534 177h1v1h-1zM538 177h1v1h-1zM534 178h1v1h-1zM538 178h1v1h-1zM534 179h1v1h-1zM538 179h1v1h-1zM535 180h3v1h-3zM544 180h1v1h-1zM550 172h5v1h-5zM550 173h1v1h-1zM550 174h1v1h-1zM550 175h4v1h-4zM554 176h1v1h-1zM554 177h1v1h-1zM554 178h1v1h-1zM550 179h1v1h-1zM554 179h1v1h-1zM551 180h3v1h-3zM559 172h3v1h-3zM558 173h1v1h-1zM562 173h1v1h-1zM558 174h1v1h-1zM562 174h1v1h-1zM558 175h1v1h-1zM562 175h1v1h-1zM559 176h4v1h-4zM562 177h1v1h-1zM562 178h1v1h-1zM561 179h1v1h-1zM559 180h2v1h-2zM567 172h3v1h-3zM566 173h1v1h-1zM570 173h1v1h-1zM570 174h1v1h-1zM570 175h1v1h-1zM569 176h1v1h-1zM568 177h1v1h-1zM567 178h1v1h-1zM566 179h1v1h-1zM566 180h5v1h-5zM575 172h3v1h-3zM574 173h1v1h-1zM578 173h1v1h-1zM574 174h1v1h-1zM578 174h1v1h-1zM574 175h1v1h-1zM578 175h1v1h-1zM574 176h1v1h-1zM578 176h1v1h-1zM574 177h1v1h-1zM578 177h1v1h-1zM574 178h1v1h-1zM578 178h1v1h-1zM574 179h1v1h-1zM578 179h1v1h-1zM575 180h3v1h-3zM584 172h2v1h-2zM583 173h1v1h-1zM582 174h1v1h-1zM582 175h1v1h-1zM582 176h4v1h-4zM582 177h1v1h-1zM586 177h1v1h-1zM582 178h1v1h-1zM586 178h1v1h-1zM582 179h1v1h-1zM586 179h1v1h-1zM583 180h3v1h-3zM535 203h3v1h-3zM534 204h1v1h-1zM538 204h1v1h-1zM534 205h1v1h-1zM538 205h1v1h-1zM534 206h1v1h-1zM538 206h1v1h-1zM534 207h1v1h-1zM538 207h1v1h-1zM534 208h1v1h-1zM538 208h1v1h-1zM534 209h1v1h-1zM538 209h1v1h-1zM534 210h1v1h-1zM538 210h1v1h-1zM535 211h3v1h-3zM544 211h1v1h-1zM551 203h3v1h-3zM550 204h1v1h-1zM554 204h1v1h-1zM554 205h1v1h-1zM554 206h1v1h-1zM552 207h2v1h-2zM554 208h1v1h-1zM554 209h1v1h-1zM550 210h1v1h-1zM554 210h1v1h-1zM551 211h3v1h-3zM558 203h5v1h-5zM558 204h1v1h-1zM558 205h1v1h-1zM558 206h4v1h-4zM562 207h1v1h-1zM562 208h1v1h-1zM562 209h1v1h-1zM558 210h1v1h-1zM562 210h1v1h-1zM559 211h3v1h-3zM569 203h1v1h-1zM568 204h2v1h-2zM568 205h2v1h-2zM567 206h1v1h-1zM569 206h1v1h-1zM567 207h1v1h-1zM569 207h1v1h-1zM566 208h1v1h-1zM569 208h1v1h-1zM566 209h5v1h-5zM569 210h1v1h-1zM568 211h3v1h-3zM575 203h3v1h-3zM574 204h1v1h-1zM578 204h1v1h-1zM578 205h1v1h-1zM578 206h1v1h-1zM576 207h2v1h-2zM578 208h1v1h-1zM578 209h1v1h-1zM574 210h1v1h-1zM578 210h1v1h-1zM575 211h3v1h-3zM582 203h5v1h-5zM582 204h1v1h-1zM582 205h1v1h-1zM582 206h4v1h-4zM586 207h1v1h-1zM586 208h1v1h-1zM586 209h1v1h-1zM582 210h1v1h-1zM586 210h1v1h-1zM583 211h3v1h-3zM535 234h3v1h-3zM534 235h1v1h-1zM538 235h1v1h-1zM534 236h1v1h-1zM538 236h1v1h-1zM534 237h1v1h-1zM538 237h1v1h-1zM534 238h1v1h-1zM538 238h1v1h-1zM534 239h1v1h-1zM538 239h1v1h-1zM534 240h1v1h-1zM538 240h1v1h-1zM534 241h1v1h-1zM538 241h1v1h-1zM535 242h3v1h-3zM544 242h1v1h-1zM551 234h3v1h-3zM550 235h1v1h-1zM554 235h1v1h-1zM554 236h1v1h-1zM554 237h1v1h-1zM552 238h2v1h-2zM554 239h1v1h-1zM554 240h1v1h-1zM550 241h1v1h-1zM554 241h1v1h-1zM551 242h3v1h-3zM558 234h5v1h-5zM558 235h1v1h-1zM558 236h1v1h-1zM558 237h4v1h-4zM562 238h1v1h-1zM562 239h1v1h-1zM562 240h1v1h-1zM558 241h1v1h-1zM562 241h1v1h-1zM559 242h3v1h-3zM569 234h1v1h-1zM568 235h2v1h-2zM568 236h2v1h-2zM567 237h1v1h-1zM569 237h1v1h-1zM567 238h1v1h-1zM569 238h1v1h-1zM566 239h1v1h-1zM569 239h1v1h-1zM566 240h5v1h-5zM569 241h1v1h-1zM568 242h3v1h-3zM575 234h3v1h-3zM574 235h1v1h-1zM578 235h1v1h-1zM578 236h1v1h-1zM578 237h1v1h-1zM576 238h2v1h-2zM578 239h1v1h-1zM578 240h1v1h-1zM574 241h1v1h-1zM578 241h1v1h-1zM575 242h3v1h-3zM582 234h5v1h-5zM582 235h1v1h-1zM582 236h1v1h-1zM582 237h4v1h-4zM586 238h1v1h-1zM586 239h1v1h-1zM586 240h1v1h-1zM582 241h1v1h-1zM586 241h1v1h-1zM583 242h3v1h-3zM535 265h3v1h-3zM534 266h1v1h-1zM538 266h1v1h-1zM534 267h1v1h-1zM538 267h1v1h-1zM534 268h1v1h-1zM538 268h1v1h-1zM534 269h1v1h-1zM538 269h1v1h-1zM534 270h1v1h-1zM538 270h1v1h-1zM534 271h1v1h-1zM538 271h1v1h-1zM534 272h1v1h-1zM538 272h1v1h-1zM535 273h3v1h-3zM544 273h1v1h-1zM551 265h3v1h-3zM550 266h1v1h-1zM554 266h1v1h-1zM550 267h1v1h-1zM554 267h1v1h-1zM550 268h1v1h-1zM554 268h1v1h-1zM550 269h1v1h-1zM554 269h1v1h-1zM550 270h1v1h-1zM554 270h1v1h-1zM550 271h1v1h-1zM554 271h1v1h-1zM550 272h1v1h-1zM554 272h1v1h-1zM551 273h3v1h-3zM560 265h1v1h-1zM558 266h3v1h-3zM560 267h1v1h-1zM560 268h1v1h-1zM560 269h1v1h-1zM560 270h1v1h-1zM560 271h1v1h-1zM560 272h1v1h-1zM558 273h5v1h-5zM567 265h3v1h-3zM566 266h1v1h-1zM570 266h1v1h-1zM566 267h1v1h-1zM570 267h1v1h-1zM566 268h1v1h-1zM570 268h1v1h-1zM567 269h3v1h-3zM566 270h1v1h-1zM570 270h1v1h-1zM566 271h1v1h-1zM570 271h1v1h-1zM566 272h1v1h-1zM570 272h1v1h-1zM567 273h3v1h-3zM574 265h5v1h-5zM574 266h1v1h-1zM574 267h1v1h-1zM574 268h4v1h-4zM578 269h1v1h-1zM578 270h1v1h-1zM578 271h1v1h-1zM574 272h1v1h-1zM578 272h1v1h-1zM575 273h3v1h-3zM582 265h5v1h-5zM582 266h1v1h-1zM586 266h1v1h-1zM586 267h1v1h-1zM585 268h1v1h-1zM585 269h1v1h-1zM584 270h1v1h-1zM584 271h1v1h-1zM583 272h1v1h-1zM583 273h1v1h-1zM525 301h7v1h-7zM535 296h3v1h-3zM534 297h1v1h-1zM538 297h1v1h-1zM534 298h1v1h-1zM538 298h1v1h-1zM534 299h1v1h-1zM538 299h1v1h-1zM534 300h1v1h-1zM538 300h1v1h-1zM534 301h1v1h-1zM538 301h1v1h-1zM534 302h1v1h-1zM538 302h1v1h-1zM534 303h1v1h-1zM538 303h1v1h-1zM535 304h3v1h-3zM544 304h1v1h-1zM551 296h3v1h-3zM550 297h1v1h-1zM554 297h1v1h-1zM550 298h1v1h-1zM554 298h1v1h-1zM550 299h1v1h-1zM554 299h1v1h-1zM550 300h1v1h-1zM554 300h1v1h-1zM550 301h1v1h-1zM554 301h1v1h-1zM550 302h1v1h-1zM554 302h1v1h-1zM550 303h1v1h-1zM554 303h1v1h-1zM551 304h3v1h-3zM560 296h1v1h-1zM558 297h3v1h-3zM560 298h1v1h-1zM560 299h1v1h-1zM560 300h1v1h-1zM560 301h1v1h-1zM560 302h1v1h-1zM560 303h1v1h-1zM558 304h5v1h-5zM568 296h2v1h-2zM567 297h1v1h-1zM566 298h1v1h-1zM566 299h1v1h-1zM566 300h4v1h-4zM566 301h1v1h-1zM570 301h1v1h-1zM566 302h1v1h-1zM570 302h1v1h-1zM566 303h1v1h-1zM570 303h1v1h-1zM567 304h3v1h-3zM575 296h3v1h-3zM574 297h1v1h-1zM578 297h1v1h-1zM574 298h1v1h-1zM578 298h1v1h-1zM574 299h1v1h-1zM578 299h1v1h-1zM575 300h4v1h-4zM578 301h1v1h-1zM578 302h1v1h-1zM577 303h1v1h-1zM575 304h2v1h-2zM584 296h2v1h-2zM583 297h1v1h-1zM582 298h1v1h-1zM582 299h1v1h-1zM582 300h4v1h-4zM582 301h1v1h-1zM586 301h1v1h-1zM582 302h1v1h-1zM586 302h1v1h-1zM582 303h1v1h-1zM586 303h1v1h-1zM583 304h3v1h-3zM525 332h7v1h-7zM535 327h3v1h-3zM534 328h1v1h-1zM538 328h1v1h-1zM534 329h1v1h-1zM538 329h1v1h-1zM534 330h1v1h-1zM538 330h1v1h-1zM534 331h1v1h-1zM538 331h1v1h-1zM534 332h1v1h-1zM538 332h1v1h-1zM534 333h1v1h-1zM538 333h1v1h-1zM534 334h1v1h-1zM538 334h1v1h-1zM535 335h3v1h-3zM544 335h1v1h-1zM551 327h3v1h-3zM550 328h1v1h-1zM554 328h1v1h-1zM550 329h1v1h-1zM554 329h1v1h-1zM550 330h1v1h-1zM554 330h1v1h-1zM550 331h1v1h-1zM554 331h1v1h-1zM550 332h1v1h-1zM554 332h1v1h-1zM550 333h1v1h-1zM554 333h1v1h-1zM550 334h1v1h-1zM554 334h1v1h-1zM551 335h3v1h-3zM560 327h1v1h-1zM558 328h3v1h-3zM560 329h1v1h-1zM560 330h1v1h-1zM560 331h1v1h-1zM560 332h1v1h-1zM560 333h1v1h-1zM560 334h1v1h-1zM558 335h5v1h-5zM568 327h2v1h-2zM567 328h1v1h-1zM566 329h1v1h-1zM566 330h1v1h-1zM566 331h4v1h-4zM566 332h1v1h-1zM570 332h1v1h-1zM566 333h1v1h-1zM570 333h1v1h-1zM566 334h1v1h-1zM570 334h1v1h-1zM567 335h3v1h-3zM575 327h3v1h-3zM574 328h1v1h-1zM578 328h1v1h-1zM574 329h1v1h-1zM578 329h1v1h-1zM574 330h1v1h-1zM578 330h1v1h-1zM575 331h4v1h-4zM578 332h1v1h-1zM578 333h1v1h-1zM577 334h1v1h-1zM575 335h2v1h-2zM584 327h2v1h-2zM583 328h1v1h-1zM582 329h1v1h-1zM582 330h1v1h-1zM582 331h4v1h-4zM582 332h1v1h-1zM586 332h1v1h-1zM582 333h1v1h-1zM586 333h1v1h-1zM582 334h1v1h-1zM586 334h1v1h-1zM583 335h3v1h-3zM525 363h7v1h-7zM535 358h3v1h-3zM534 359h1v1h-1zM538 359h1v1h-1zM534 360h1v1h-1zM538 360h1v1h-1zM534 361h1v1h-1zM538 361h1v1h-1zM534 362h1v1h-1zM538 362h1v1h-1zM534 363h1v1h-1zM538 363h1v1h-1zM534 364h1v1h-1zM538 364h1v1h-1zM534 365h1v1h-1zM538 365h1v1h-1zM535 366h3v1h-3zM544 366h1v1h-1zM552 358h1v1h-1zM550 359h3v1h-3zM552 360h1v1h-1zM552 361h1v1h-1zM552 362h1v1h-1zM552 363h1v1h-1zM552 364h1v1h-1zM552 365h1v1h-1zM550 366h5v1h-5zM559 358h3v1h-3zM558 359h1v1h-1zM562 359h1v1h-1zM558 360h1v1h-1zM562 360h1v1h-1zM558 361h1v1h-1zM562 361h1v1h-1zM558 362h1v1h-1zM562 362h1v1h-1zM558 363h1v1h-1zM562 363h1v1h-1zM558 364h1v1h-1zM562 364h1v1h-1zM558 365h1v1h-1zM562 365h1v1h-1zM559 366h3v1h-3zM568 358h2v1h-2zM567 359h1v1h-1zM566 360h1v1h-1zM566 361h1v1h-1zM566 362h4v1h-4zM566 363h1v1h-1zM570 363h1v1h-1zM566 364h1v1h-1zM570 364h1v1h-1zM566 365h1v1h-1zM570 365h1v1h-1zM567 366h3v1h-3zM575 358h3v1h-3zM574 359h1v1h-1zM578 359h1v1h-1zM578 360h1v1h-1zM578 361h1v1h-1zM577 362h1v1h-1zM576 363h1v1h-1zM575 364h1v1h-1zM574 365h1v1h-1zM574 366h5v1h-5zM584 358h2v1h-2zM583 359h1v1h-1zM582 360h1v1h-1zM582 361h1v1h-1zM582 362h4v1h-4zM582 363h1v1h-1zM586 363h1v1h-1zM582 364h1v1h-1zM586 364h1v1h-1zM582 365h1v1h-1zM586 365h1v1h-1zM583 366h3v1h-3zM525 394h7v1h-7zM535 389h3v1h-3zM534 390h1v1h-1zM538 390h1v1h-1zM534 391h1v1h-1zM538 391h1v1h-1zM534 392h1v1h-1zM538 392h1v1h-1zM534 393h1v1h-1zM538 393h1v1h-1zM534 394h1v1h-1zM538 394h1v1h-1zM534 395h1v1h-1zM538 395h1v1h-1zM534 396h1v1h-1zM538 396h1v1h-1zM535 397h3v1h-3zM544 397h1v1h-1zM550 389h5v1h-5zM550 390h1v1h-1zM550 391h1v1h-1zM550 392h4v1h-4zM554 393h1v1h-1zM554 394h1v1h-1zM554 395h1v1h-1zM550 396h1v1h-1zM554 396h1v1h-1zM551 397h3v1h-3zM560 389h2v1h-2zM559 390h1v1h-1zM558 391h1v1h-1zM558 392h1v1h-1zM558 393h4v1h-4zM558 394h1v1h-1zM562 394h1v1h-1zM558 395h1v1h-1zM562 395h1v1h-1zM558 396h1v1h-1zM562 396h1v1h-1zM559 397h3v1h-3zM568 389h1v1h-1zM566 390h3v1h-3zM568 391h1v1h-1zM568 392h1v1h-1zM568 393h1v1h-1zM568 394h1v1h-1zM568 395h1v1h-1zM568 396h1v1h-1zM566 397h5v1h-5zM575 389h3v1h-3zM574 390h1v1h-1zM578 390h1v1h-1zM574 391h1v1h-1zM578 391h1v1h-1zM574 392h1v1h-1zM578 392h1v1h-1zM575 393h4v1h-4zM578 394h1v1h-1zM578 395h1v1h-1zM577 396h1v1h-1zM575 397h2v1h-2zM582 389h5v1h-5zM582 390h1v1h-1zM582 391h1v1h-1zM582 392h4v1h-4zM586 393h1v1h-1zM586 394h1v1h-1zM586 395h1v1h-1zM582 396h1v1h-1zM586 396h1v1h-1zM583 397h3v1h-3zM525 425h7v1h-7zM535 420h3v1h-3zM534 421h1v1h-1zM538 421h1v1h-1zM534 422h1v1h-1zM538 422h1v1h-1zM534 423h1v1h-1zM538 423h1v1h-1zM535 424h4v1h-4zM538 425h1v1h-1zM538 426h1v1h-1zM537 427h1v1h-1zM535 428h2v1h-2zM544 428h1v1h-1zM551 420h3v1h-3zM550 421h1v1h-1zM554 421h1v1h-1zM550 422h1v1h-1zM554 422h1v1h-1zM550 423h1v1h-1zM554 423h1v1h-1zM551 424h3v1h-3zM550 425h1v1h-1zM554 425h1v1h-1zM550 426h1v1h-1zM554 426h1v1h-1zM550 427h1v1h-1zM554 427h1v1h-1zM551 428h3v1h-3zM560 420h2v1h-2zM559 421h1v1h-1zM558 422h1v1h-1zM558 423h1v1h-1zM558 424h4v1h-4zM558 425h1v1h-1zM562 425h1v1h-1zM558 426h1v1h-1zM562 426h1v1h-1zM558 427h1v1h-1zM562 427h1v1h-1zM559 428h3v1h-3zM566 420h5v1h-5zM566 421h1v1h-1zM570 421h1v1h-1zM570 422h1v1h-1zM569 423h1v1h-1zM569 424h1v1h-1zM568 425h1v1h-1zM568 426h1v1h-1zM567 427h1v1h-1zM567 428h1v1h-1zM575 420h3v1h-3zM574 421h1v1h-1zM578 421h1v1h-1zM578 422h1v1h-1zM578 423h1v1h-1zM577 424h1v1h-1zM576 425h1v1h-1zM575 426h1v1h-1zM574 427h1v1h-1zM574 428h5v1h-5zM583 420h3v1h-3zM582 421h1v1h-1zM586 421h1v1h-1zM582 422h1v1h-1zM586 422h1v1h-1zM582 423h1v1h-1zM586 423h1v1h-1zM582 424h1v1h-1zM586 424h1v1h-1zM582 425h1v1h-1zM586 425h1v1h-1zM582 426h1v1h-1zM586 426h1v1h-1zM582 427h1v1h-1zM586 427h1v1h-1zM583 428h3v1h-3zM517 456h7v1h-7zM528 451h1v1h-1zM526 452h3v1h-3zM528 453h1v1h-1zM528 454h1v1h-1zM528 455h1v1h-1zM528 456h1v1h-1zM528 457h1v1h-1zM528 458h1v1h-1zM526 459h5v1h-5zM537 451h1v1h-1zM536 452h2v1h-2zM536 453h2v1h-2zM535 454h1v1h-1zM537 454h1v1h-1zM535 455h1v1h-1zM537 455h1v1h-1zM534 456h1v1h-1zM537 456h1v1h-1zM534 457h5v1h-5zM537 458h1v1h-1zM536 459h3v1h-3zM544 459h1v1h-1zM551 451h3v1h-3zM550 452h1v1h-1zM554 452h1v1h-1zM550 453h1v1h-1zM554 453h1v1h-1zM550 454h1v1h-1zM554 454h1v1h-1zM550 455h1v1h-1zM554 455h1v1h-1zM550 456h1v1h-1zM554 456h1v1h-1zM550 457h1v1h-1zM554 457h1v1h-1zM550 458h1v1h-1zM554 458h1v1h-1zM551 459h3v1h-3zM559 451h3v1h-3zM558 452h1v1h-1zM562 452h1v1h-1zM558 453h1v1h-1zM562 453h1v1h-1zM558 454h1v1h-1zM562 454h1v1h-1zM558 455h1v1h-1zM562 455h1v1h-1zM558 456h1v1h-1zM562 456h1v1h-1zM558 457h1v1h-1zM562 457h1v1h-1zM558 458h1v1h-1zM562 458h1v1h-1zM559 459h3v1h-3zM567 451h3v1h-3zM566 452h1v1h-1zM570 452h1v1h-1zM570 453h1v1h-1zM570 454h1v1h-1zM568 455h2v1h-2zM570 456h1v1h-1zM570 457h1v1h-1zM566 458h1v1h-1zM570 458h1v1h-1zM567 459h3v1h-3zM575 451h3v1h-3zM574 452h1v1h-1zM578 452h1v1h-1zM574 453h1v1h-1zM578 453h1v1h-1zM574 454h1v1h-1zM578 454h1v1h-1zM575 455h4v1h-4zM578 456h1v1h-1zM578 457h1v1h-1zM577 458h1v1h-1zM575 459h2v1h-2zM583 451h3v1h-3zM582 452h1v1h-1zM586 452h1v1h-1zM586 453h1v1h-1zM586 454h1v1h-1zM584 455h2v1h-2zM586 456h1v1h-1zM586 457h1v1h-1zM582 458h1v1h-1zM586 458h1v1h-1zM583 459h3v1h-3z"/></svg>
</div>
<div class="sb"></div>
<svg class="sa" style="top:12px" width="9" height="6" viewBox="0 0 9 6"><defs><linearGradient id="ag" x1="0" y1="0" x2="0" y2="1"><stop offset="0" stop-color="#0c0c0c"/><stop offset=".5" stop-color="#3a3a3a"/><stop offset="1" stop-color="#9a9a9a"/></linearGradient></defs><path d="M1 5L4.500 .8L8 5Z" fill="url(#ag)"/></svg>
<div class="th"></div>
<div class="gr" style="top:372px"></div><div class="gr" style="top:375px"></div><div class="gr" style="top:378px"></div>
<svg class="sa" style="top:498px" width="9" height="6" viewBox="0 0 9 6"><path d="M1 1L8 1L4.500 5.200Z" fill="url(#ag)"/></svg>
</body></html>
